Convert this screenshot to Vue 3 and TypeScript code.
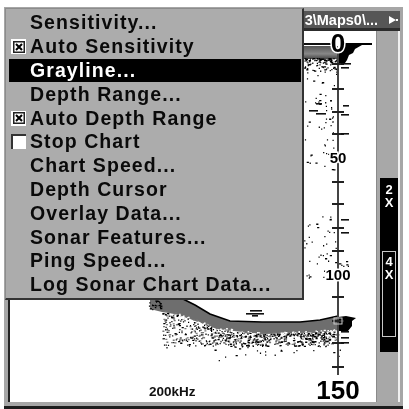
<script setup lang="ts">
type Item = { label: string; check?: 'on' | 'off'; active?: boolean }

const items: Item[] = [
  { label: 'Sensitivity...' },
  { label: 'Auto Sensitivity', check: 'on' },
  { label: 'Grayline...', active: true },
  { label: 'Depth Range...' },
  { label: 'Auto Depth Range', check: 'on' },
  { label: 'Stop Chart', check: 'off' },
  { label: 'Chart Speed...' },
  { label: 'Depth Cursor' },
  { label: 'Overlay Data...' },
  { label: 'Sonar Features...' },
  { label: 'Ping Speed...' },
  { label: 'Log Sonar Chart Data...' },
]

let seed = 12345
function rnd(): number {
  seed = (seed + 0x6d2b79f5) | 0
  let t = Math.imul(seed ^ (seed >>> 15), 1 | seed)
  t = (t + Math.imul(t ^ (t >>> 7), 61 | t)) ^ t
  return ((t ^ (t >>> 14)) >>> 0) / 4294967296
}

function lerpCurve(pts: number[][], x: number): number {
  for (let i = 1; i < pts.length; i++) {
    if (x <= pts[i][0]) {
      const [x0, y0] = pts[i - 1]
      const [x1, y1] = pts[i]
      return y0 + ((y1 - y0) * (x - x0)) / (x1 - x0)
    }
  }
  return pts[pts.length - 1][1]
}

const topEdge = [[183, 299], [195, 305], [210, 314], [230, 321], [262, 322], [300, 322], [320, 320], [338, 316]]
const lowEdge = [[162, 312], [175, 314], [190, 319], [217, 329], [260, 334], [300, 333], [338, 331]]

const rectAt = (x: number, y: number, w: number) =>
  `M${x.toFixed(1)} ${y.toFixed(1)}h${w}v1.3h-${w}z`

let dots = ''
let grays = ''
let lights = ''
const dot = (x: number, y: number) => {
  dots += rectAt(x, y, rnd() < 0.25 ? 2.2 : 1.2)
}

// surface clutter
for (let i = 0; i < 120; i++) dot(304 + rnd() * 34, 58 + rnd() * 17 * rnd())
// sparse column under the surface
for (let i = 0; i < 50; i++) dot(304 + rnd() * 32, 76 + rnd() * 94)
// mid-water scatter next to the menu
for (let i = 0; i < 40; i++) dot(304 + rnd() * 34, 214 + rnd() * 66)
for (let i = 0; i < 6; i++) dot(340 + rnd() * 8, 258 + rnd() * 12)
// bottom echo speckle
for (let i = 0; i < 430; i++) {
  const x = 162 + rnd() * 176
  const low = lerpCurve(lowEdge, x)
  dot(x, low + Math.pow(rnd(), 1.3) * (346 - low))
}
for (let i = 0; i < 300; i++) {
  const x = 162 + rnd() * 176
  const low = lerpCurve(lowEdge, x)
  grays += rectAt(x, low - 2 + Math.pow(rnd(), 1.3) * (346 - low), 2)
}
for (let i = 0; i < 120; i++) {
  const x = 165 + rnd() * 173
  const low = lerpCurve(lowEdge, x)
  lights += rectAt(x, low - 2 + rnd() * 4, 1.6)
}
for (let i = 0; i < 30; i++) {
  const x = 165 + rnd() * 175
  dot(x, 345 + rnd() * rnd() * 18)
}
for (let i = 0; i < 22; i++) dot(148 + rnd() * 14, 300 + rnd() * 9)

const band =
  'M150 299L183 299' +
  topEdge.map((p) => `L${p[0]} ${p[1]}`).join('') +
  [...lowEdge].reverse().map((p) => `L${p[0]} ${p[1]}`).join('') +
  'L150 309Z'
const bandTop = 'M183 299' + topEdge.map((p) => `L${p[0]} ${p[1]}`).join('')

const ticks = [64, 89, 112, 134, 182, 204, 228, 251, 297, 321, 343, 367]
const marks: number[][] = [
  [63, 341, 351], [67, 341, 349], [105, 343, 349], [114, 341, 349], [133, 341, 349],
  [219, 341, 349], [232, 341, 349], [331, 341, 349], [337, 341, 349], [342, 341, 349],
  [103, 316, 322], [110, 309, 318], [113, 316, 326], [100, 330, 332],
  [310, 250, 262], [313, 246, 264], [315, 252, 258],
]
</script>

<template>
  <div class="screen">
    <div class="frame">
      <header class="path-bar">
        <span class="path">3\Maps0\...</span>
        <svg class="arrow" viewBox="0 0 9 8" width="9" height="8">
          <path d="M0 0L7 4L0 8Z M7 3h2v2h-2z" fill="#fff" />
        </svg>
      </header>
      <div class="body">
        <div class="chart">
          <svg class="sonar" viewBox="10 31 366 371" width="366" height="371">
            <defs>
              <linearGradient id="surf" x1="0" y1="0" x2="0" y2="1">
                <stop offset="0" stop-color="#555" />
                <stop offset="0.6" stop-color="#888" />
                <stop offset="1" stop-color="#444" />
              </linearGradient>
            </defs>
            <rect x="304" y="46" width="34" height="13" fill="url(#surf)" />
            <rect x="304" y="43" width="28" height="2" fill="#111" />
            <path d="M344 43H372V45H362L355 49L353 53L349 55L347 60L345 63H339V46Z" fill="#000" />
            <path :d="band" fill="#6e6e6e" />
            <path :d="grays" fill="#777" />
            <path :d="lights" fill="#fff" />
            <path :d="bandTop" fill="none" stroke="#000" stroke-width="1.6" />
            <path d="M338 317L346 316L356 318L352 321L352 326L348 331L338 331Z" fill="#000" />
            <path :d="dots" fill="#000" />
            <rect x="337" y="50" width="2" height="325" fill="#444" />
            <rect v-for="t in ticks" :key="t" x="332" :y="t - 1" width="12" height="2" fill="#222" />
            <rect v-for="m in marks" :key="m[0] + '-' + m[1]" :x="m[1]" :y="m[0]" :width="m[2] - m[1]" height="1.6" fill="#111" />
            <rect x="334" y="318" width="8" height="6" fill="none" stroke="#ccc" stroke-width="1" />
            <text class="depth big" x="338" y="52">0</text>
            <text class="depth small" x="338" y="163">50</text>
            <text class="depth small" x="338" y="280">100</text>
            <text class="depth big" x="338" y="399">150</text>
            <text class="freq" x="149" y="396">200kHz</text>
          </svg>
        </div>
        <aside class="zoom-rail">
          <div class="zoom-track">
            <div class="zoom-label">2<br />X</div>
            <div class="zoom-window">
              <div class="zoom-label">4<br />X</div>
            </div>
          </div>
        </aside>
      </div>
    </div>

    <nav class="menu">
      <div v-for="item in items" :key="item.label" class="row" :class="{ active: item.active }">
        <span class="slot">
          <span v-if="item.check === 'off'" class="check empty"></span>
          <span v-else-if="item.check === 'on'" class="check">
            <svg viewBox="0 0 12 12" width="12" height="12">
              <rect x="0.75" y="0.75" width="10.5" height="10.5" fill="none" stroke="#222" stroke-width="1.5" />
              <path d="M3 3L9 9M9 3L3 9" stroke="#000" stroke-width="2" fill="none" />
            </svg>
          </span>
        </span>
        <span class="label">{{ item.label }}</span>
      </div>
    </nav>
  </div>
</template>

<style scoped>
.screen {
  position: relative;
  width: 409px;
  height: 409px;
  box-sizing: border-box;
  padding: 7px 6px 0 4px;
  background: #fff;
  overflow: hidden;
  font-family: "Liberation Sans", Arial, sans-serif;
  filter: blur(0.4px);
}
.frame {
  display: flex;
  flex-direction: column;
  height: 402px;
  box-sizing: border-box;
  padding: 4px 3px 4px 4px;
  background: #a6a6a6;
  border-bottom: 3px solid #1c1c1c;
}
.path-bar {
  display: flex;
  align-items: center;
  justify-content: flex-end;
  height: 17px;
  padding-right: 2px;
  background: #565656;
  border-bottom: 3px solid #2c2c2c;
  color: #fff;
  flex: none;
}
.path {
  font-size: 14.5px;
  font-weight: 700;
  margin-right: 11px;
}
.body {
  display: flex;
  flex: 1;
  min-height: 0;
}
.chart {
  width: 368px;
  box-sizing: border-box;
  border-left: 2px solid #222;
  background: #fff;
  flex: none;
}
.sonar {
  display: block;
  overflow: visible;
}
.depth {
  font-weight: 700;
  text-anchor: middle;
  fill: #000;
  stroke: #fff;
  stroke-width: 3px;
  paint-order: stroke;
}
.big {
  font-size: 26px;
}
.small {
  font-size: 15px;
}
.freq {
  font-size: 13.5px;
  font-weight: 700;
  fill: #111;
}
.zoom-rail {
  width: 24px;
  flex: none;
  box-sizing: border-box;
  padding: 147px 0 50px 3px;
  background: #a8a8a8;
  border-left: 1px solid #8a8a8a;
  border-right: 2px solid #f0f0f0;
}
.zoom-track {
  height: 174px;
  box-sizing: border-box;
  padding-top: 5px;
  background: #000;
}
.zoom-label {
  color: #fff;
  font-size: 13px;
  line-height: 13px;
  font-weight: 700;
  text-align: center;
}
.zoom-window {
  height: 86px;
  box-sizing: border-box;
  margin: 42px 2px 0;
  padding-top: 3px;
  border: 1px solid #c8c8c8;
}
.menu {
  position: absolute;
  left: 5px;
  top: 8px;
  width: 299px;
  height: 292px;
  box-sizing: border-box;
  padding: 2px 1px 0 3px;
  background: #acacac;
  border-top: 1px solid #8c8c8c;
  border-left: 1px solid #8c8c8c;
  border-right: 2px solid #333;
  border-bottom: 2px solid #333;
}
.row {
  display: flex;
  align-items: center;
  height: 23.8px;
  color: #0a0a0a;
  font-size: 19.5px;
  font-weight: 700;
  letter-spacing: 1.08px;
}
.row.active {
  background: #000;
  color: #fff;
}
.slot {
  display: flex;
  width: 21px;
  padding-left: 2px;
  box-sizing: border-box;
  flex: none;
}
.check {
  display: flex;
  align-items: center;
  justify-content: center;
  width: 15px;
  height: 15px;
  box-sizing: border-box;
  background: #fff;
}
.check.empty {
  border-top: 2px solid #333;
  border-left: 2px solid #333;
}
</style>
